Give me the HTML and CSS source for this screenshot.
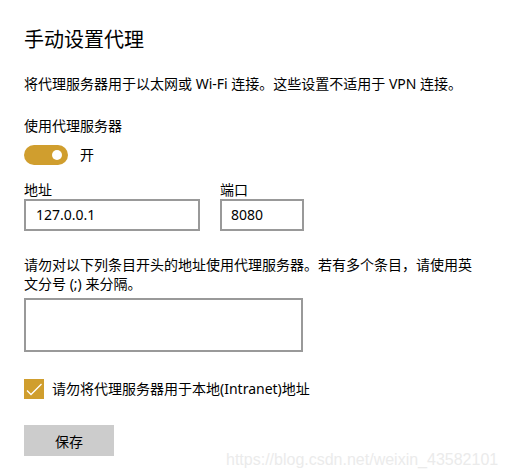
FILE: index.html
```html
<!DOCTYPE html>
<html lang="zh-CN">
<head>
<meta charset="utf-8">
<title>手动设置代理</title>
<link rel="stylesheet" href="styles.css">
</head>
<body>
<main class="page">
  <h1 class="title">手动设置代理</h1>
  <p class="desc">将代理服务器用于以太网或 Wi-Fi 连接。这些设置不适用于 VPN 连接。</p>

  <div class="label">使用代理服务器</div>
  <div class="toggle-row">
    <span class="toggle"><span class="knob"></span></span>
    <span class="toggle-text">开</span>
  </div>

  <div class="fields">
    <div class="field">
      <div class="field-label">地址</div>
      <div class="input input-addr">127.0.0.1</div>
    </div>
    <div class="field">
      <div class="field-label">端口</div>
      <div class="input input-port">8080</div>
    </div>
  </div>

  <p class="para">请勿对以下列条目开头的地址使用代理服务器。若有多个条目，请使用英文分号 (;) 来分隔。</p>
  <div class="textarea"></div>

  <div class="check-row">
    <span class="checkbox">
      <svg width="20" height="20" viewBox="0 0 20 20"><path d="M3 11.5 L7 15.5 L17.5 5" fill="none" stroke="#fff" stroke-width="1.3"/></svg>
    </span>
    <span class="check-text">请勿将代理服务器用于本地(Intranet)地址</span>
  </div>

  <div class="btn">保存</div>
</main>
<div class="watermark">https://blog.csdn.net/weixin_43582101</div>
</body>
</html>
```

FILE: styles.css
```css
html, body {
  margin: 0;
  padding: 0;
  background: #fff;
}
body {
  width: 505px;
  height: 476px;
  position: relative;
  overflow: hidden;
  font-family: "Noto Sans", "Noto Sans CJK SC", sans-serif;
  color: #000;
  font-size: 14px;
}
.page {
  padding: 26px 0 0 24px;
  display: flex;
  flex-direction: column;
  align-items: flex-start;
}
.title {
  margin: 0;
  font-size: 20px;
  font-weight: 400;
  line-height: 28px;
}
.desc {
  margin: 20px 0 0;
  line-height: 20px;
}
.label {
  margin-top: 22px;
  line-height: 20px;
}
.toggle-row {
  margin-top: 9px;
  display: flex;
  align-items: center;
  height: 20px;
}
.toggle {
  width: 44px;
  height: 20px;
  border-radius: 10px;
  background: #d09e2e;
  position: relative;
}
.knob {
  position: absolute;
  width: 10px;
  height: 10px;
  border-radius: 50%;
  background: #fff;
  top: 5px;
  right: 6px;
}
.toggle-text {
  margin-left: 12px;
  line-height: 20px;
}
.fields {
  margin-top: 16px;
  display: flex;
  gap: 20px;
}
.field-label {
  line-height: 18px;
}
.input {
  box-sizing: border-box;
  height: 32px;
  border: 2px solid #999;
  padding: 0 10px;
  line-height: 28px;
}
.input-addr { width: 176px; }
.input-port { width: 84px; padding-left: 9px; }
.para {
  margin: 24px 0 0;
  width: 455px;
  line-height: 19px;
}
.textarea {
  box-sizing: border-box;
  margin-top: 5px;
  width: 279px;
  height: 54px;
  border: 2px solid #999;
}
.check-row {
  margin-top: 27px;
  display: flex;
  align-items: center;
  height: 20px;
}
.checkbox {
  width: 20px;
  height: 20px;
  background: #d09e2e;
  display: block;
}
.checkbox svg { display: block; }
.check-text {
  margin-left: 8px;
  line-height: 20px;
}
.btn {
  margin-top: 26px;
  width: 90px;
  height: 31px;
  background: #ccc;
  display: flex;
  align-items: center;
  justify-content: center;
}
.watermark {
  position: absolute;
  left: 226px;
  top: 450px;
  font-family: "Liberation Sans", Arial, sans-serif;
  font-size: 16px;
  line-height: 20px;
  color: #ebebeb;
}
```
